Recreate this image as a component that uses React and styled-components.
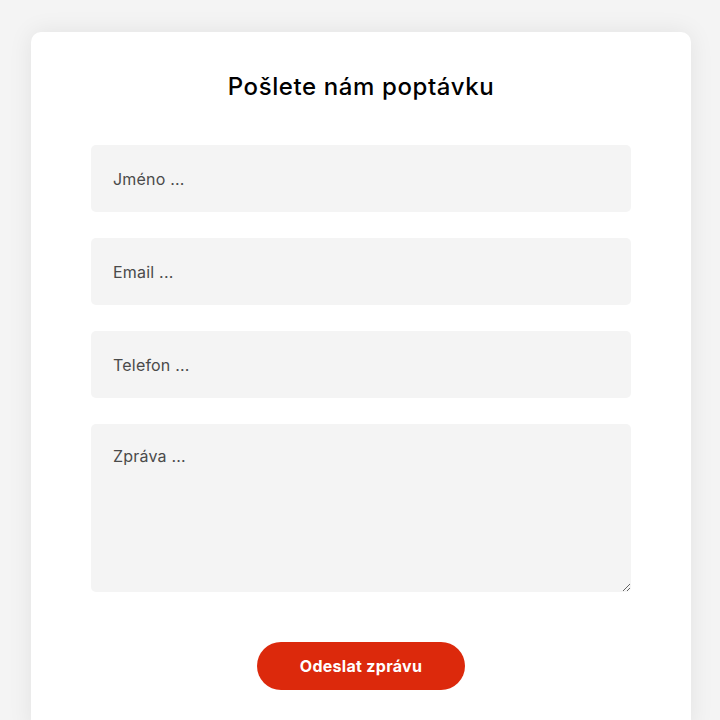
import React from "react";
import styled, { createGlobalStyle } from "styled-components";

const Global = createGlobalStyle`
  html, body { margin: 0; padding: 0; background: #f4f4f4; }
  body { font-family: Inter, "Noto Sans", sans-serif; }
  * { box-sizing: border-box; }
`;

const Page = styled.div`
  padding: 32px 29px 0 31px;
  min-height: 720px;
`;

const Card = styled.form`
  background: #fff;
  border-radius: 10px;
  box-shadow: 0 0 24px rgba(0, 0, 0, 0.08);
  padding: 40px 60px 30px;
  display: flex;
  flex-direction: column;
  min-height: 700px;
`;

const Title = styled.h2`
  margin: 0 0 44px;
  text-align: center;
  font-size: 24px;
  line-height: 29px;
  font-weight: 500;
  letter-spacing: 0.6px;
  color: #000;
`;

const Fields = styled.div`
  display: flex;
  flex-direction: column;
  gap: 26px;
`;

const fieldBase = `
  width: 100%;
  border: none;
  outline: none;
  background: #f4f4f4;
  border-radius: 5px;
  padding: 22px 22px;
  font-family: Inter, "Noto Sans", sans-serif;
  font-size: 16px;
  letter-spacing: 0.2px;
  color: #333;
  &::placeholder { color: #4a4a4a; opacity: 1; }
`;

const Input = styled.input`
  ${fieldBase}
  height: 67px;
`;

const TextArea = styled.textarea`
  ${fieldBase}
  height: 168px;
  resize: vertical;
  display: block;
`;

const Actions = styled.div`
  display: flex;
  justify-content: center;
  margin-top: 50px;
`;

const Button = styled.button`
  width: 208px;
  height: 48px;
  border: none;
  border-radius: 24px;
  background: #dc290c;
  color: #fff;
  font-family: Inter, "Noto Sans", sans-serif;
  font-size: 16px;
  font-weight: 700;
  letter-spacing: 0.3px;
  cursor: pointer;
`;

export default function App() {
  return (
    <>
      <Global />
      <Page>
        <Card onSubmit={(e) => e.preventDefault()}>
          <Title>Pošlete nám poptávku</Title>
          <Fields>
            <Input placeholder="Jméno ..." />
            <Input placeholder="Email ..." />
            <Input placeholder="Telefon ..." />
            <TextArea placeholder="Zpráva ..." />
          </Fields>
          <Actions>
            <Button type="submit">Odeslat zprávu</Button>
          </Actions>
        </Card>
      </Page>
    </>
  );
}
